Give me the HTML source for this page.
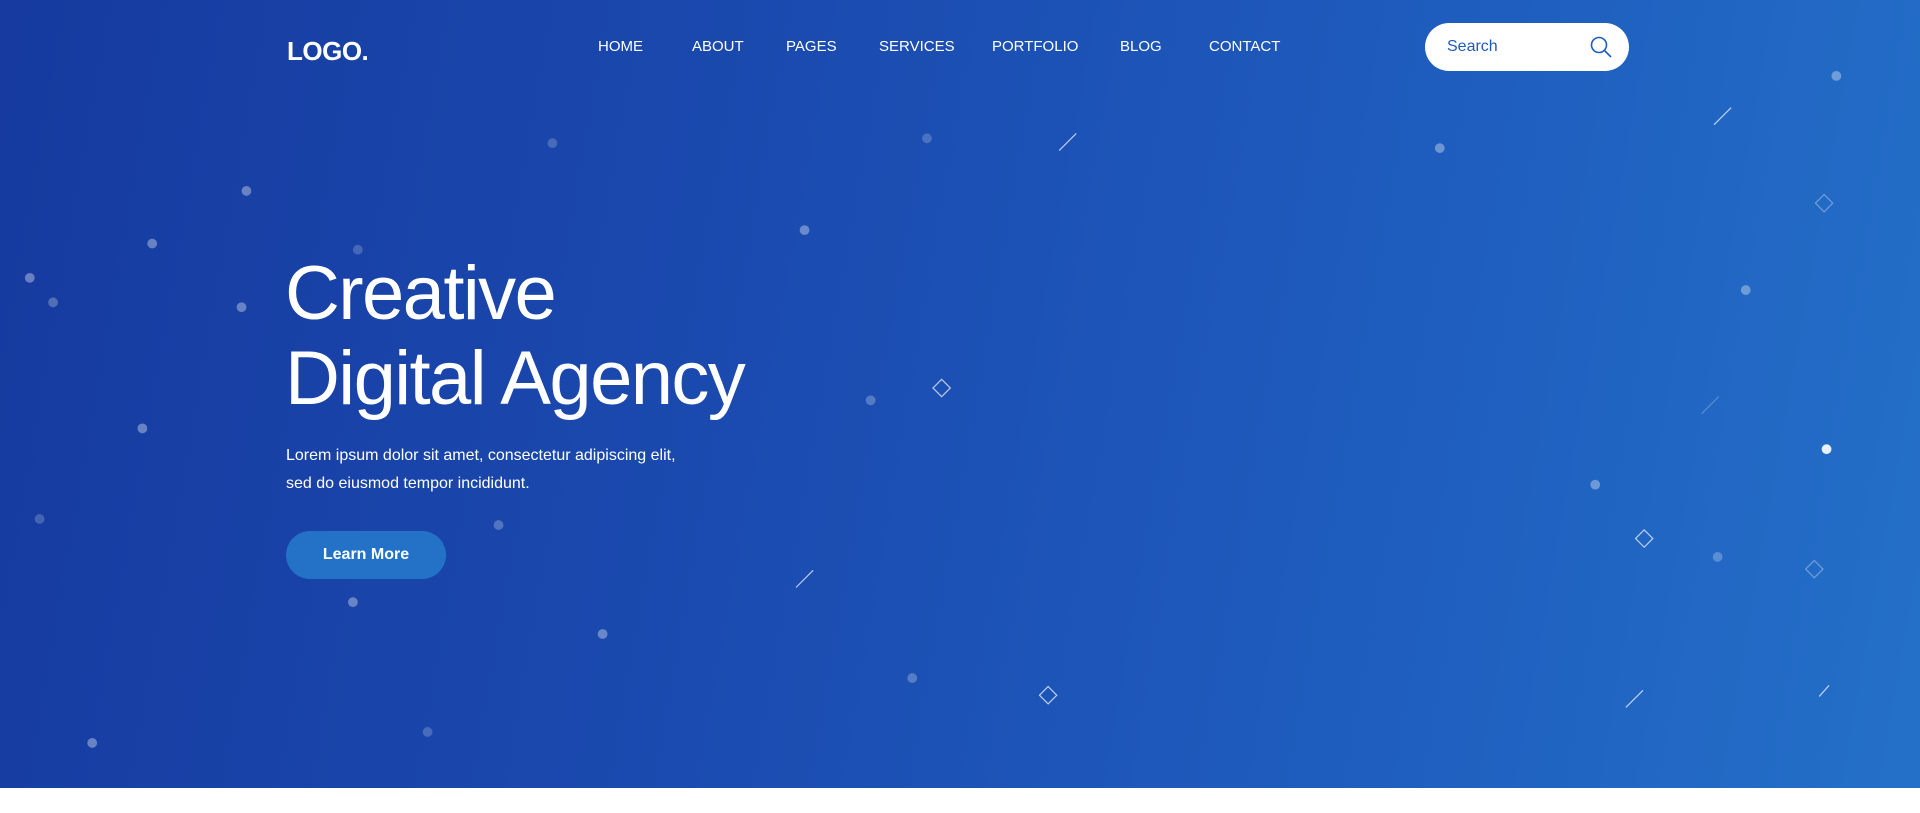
<!DOCTYPE html>
<html><head><meta charset="utf-8"><style>
*{margin:0;padding:0;box-sizing:border-box}
body{width:1920px;height:813px;background:#fff;font-family:"Liberation Sans",Arial,sans-serif;overflow:hidden;position:relative}
.hero{position:absolute;left:0;top:0;width:1920px;height:788px;background:linear-gradient(100deg,#163a9f 0%,#1b4bb0 40%,#1f5fbf 75%,#2470c8 100%)}
svg.deco{position:absolute;left:0;top:0}
.logo{position:absolute;left:287px;top:36px;color:#fff;font-weight:bold;font-size:26px;letter-spacing:-0.5px}
.nav a{position:absolute;top:38px;color:#fff;font-size:15px;text-decoration:none}
.search{position:absolute;left:1425px;top:23px;width:204px;height:48px;background:#fff;border-radius:24px}
.search span{position:absolute;left:22px;top:15px;color:#1e5bbf;font-size:16px}
h1{position:absolute;left:285px;top:251px;color:#fff;font-weight:normal;font-size:76px;line-height:85px;letter-spacing:-1.6px}
p{position:absolute;left:286px;top:442px;color:#fff;font-size:16px;line-height:28px}
.btn{position:absolute;left:286px;top:531px;width:160px;height:48px;border-radius:24px;background:#2472c8;color:#fff;font-weight:bold;font-size:16px;text-align:center;line-height:48px}
</style></head><body>
<div class="hero">
<svg class="deco" width="1920" height="787" viewBox="0 0 1568 643">
<g fill="#fff" fill-opacity="0.35">
<circle cx="1500" cy="62" r="4"/><circle cx="451" cy="117" r="4" fill-opacity="0.2"/><circle cx="757" cy="113" r="4" fill-opacity="0.2"/><circle cx="1176" cy="121" r="4"/><circle cx="201" cy="156" r="4"/><circle cx="124" cy="199" r="4"/><circle cx="292" cy="204" r="4" fill-opacity="0.2"/><circle cx="657" cy="188" r="4"/><circle cx="24" cy="227" r="4"/><circle cx="43" cy="247" r="4" fill-opacity="0.25"/><circle cx="197" cy="251" r="4"/><circle cx="1426" cy="237" r="4"/><circle cx="711" cy="327" r="4" fill-opacity="0.25"/><circle cx="116" cy="350" r="4"/><circle cx="1492" cy="367" r="4" fill-opacity="0.9"/><circle cx="1303" cy="396" r="4"/><circle cx="32" cy="424" r="4" fill-opacity="0.2"/><circle cx="407" cy="429" r="4" fill-opacity="0.25"/><circle cx="1403" cy="455" r="4" fill-opacity="0.25"/><circle cx="288" cy="492" r="4"/><circle cx="492" cy="518" r="4"/><circle cx="745" cy="554" r="4" fill-opacity="0.25"/><circle cx="75" cy="607" r="4"/><circle cx="349" cy="598" r="4" fill-opacity="0.2"/>
</g>
<g stroke="#fff" stroke-width="1" fill="none" stroke-opacity="0.7">
<line x1="1400" y1="102" x2="1414" y2="88"/><line x1="865" y1="123" x2="879" y2="109"/><line x1="1390" y1="338" x2="1404" y2="324" stroke-opacity="0.25"/><line x1="650" y1="480" x2="664" y2="466"/><line x1="1328" y1="578" x2="1342" y2="564"/><line x1="1486" y1="569" x2="1494" y2="560"/>
<rect x="764" y="312" width="10" height="10" transform="rotate(45 769 317)"/>
<rect x="1485" y="161" width="10" height="10" transform="rotate(45 1490 166)" stroke-opacity="0.35"/>
<rect x="1338" y="435" width="10" height="10" transform="rotate(45 1343 440)"/>
<rect x="1477" y="460" width="10" height="10" transform="rotate(45 1482 465)" stroke-opacity="0.35"/>
<rect x="851" y="563" width="10" height="10" transform="rotate(45 856 568)"/>
</g>
</svg>
<div class="logo">LOGO.</div>
<div class="nav"><a style="left:598px">HOME</a><a style="left:692px">ABOUT</a><a style="left:786px">PAGES</a><a style="left:879px">SERVICES</a><a style="left:992px">PORTFOLIO</a><a style="left:1120px">BLOG</a><a style="left:1209px">CONTACT</a></div>
<div class="search"><span>Search</span>
<svg style="position:absolute;left:164px;top:12px" width="24" height="24" viewBox="0 0 24 24"><circle cx="10" cy="10" r="7.5" fill="none" stroke="#1e5bbf" stroke-width="1.6"/><line x1="15.5" y1="15.5" x2="22" y2="22" stroke="#1e5bbf" stroke-width="1.6"/></svg></div>
<h1>Creative<br>Digital Agency</h1>
<p>Lorem ipsum dolor sit amet, consectetur adipiscing elit,<br>sed do eiusmod tempor incididunt.</p>
<div class="btn">Learn More</div>
</div>
</body></html>
